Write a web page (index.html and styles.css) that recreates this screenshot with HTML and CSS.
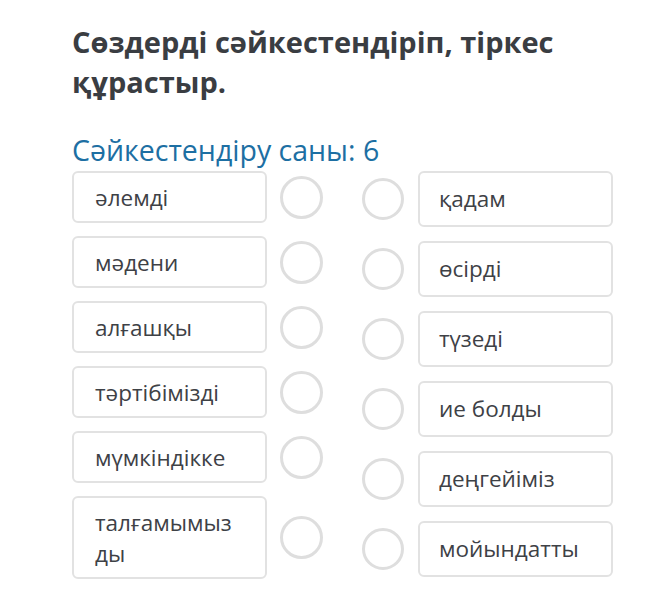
FILE: index.html
```html
<!DOCTYPE html>
<html lang="kk">
<head>
<meta charset="utf-8">
<title>Сәйкестендіру</title>
<link rel="stylesheet" href="styles.css">
</head>
<body>
<main class="task">
  <h1 class="title">Сөздерді сәйкестендіріп, тіркес құрастыр.</h1>
  <p class="count">Сәйкестендіру саны: 6</p>
  <div class="match">
    <div class="col col-left">
      <div class="row"><div class="card">әлемді</div><span class="dot"></span></div>
      <div class="row"><div class="card">мәдени</div><span class="dot"></span></div>
      <div class="row"><div class="card">алғашқы</div><span class="dot"></span></div>
      <div class="row"><div class="card">тәртібімізді</div><span class="dot"></span></div>
      <div class="row"><div class="card">мүмкіндікке</div><span class="dot"></span></div>
      <div class="row"><div class="card">талғамымыз&#8203;ды</div><span class="dot"></span></div>
    </div>
    <div class="col col-right">
      <div class="row"><span class="dot"></span><div class="card">қадам</div></div>
      <div class="row"><span class="dot"></span><div class="card">өсірді</div></div>
      <div class="row"><span class="dot"></span><div class="card">түзеді</div></div>
      <div class="row"><span class="dot"></span><div class="card">ие болды</div></div>
      <div class="row"><span class="dot"></span><div class="card">деңгейіміз</div></div>
      <div class="row"><span class="dot"></span><div class="card">мойындатты</div></div>
    </div>
  </div>
</main>
</body>
</html>
```

FILE: styles.css
```css
html, body {
  margin: 0;
  padding: 0;
  background: #ffffff;
}
body {
  font-family: "Open Sans", "DejaVu Sans", sans-serif;
  color: #3a3d42;
}
.task {
  padding: 22px 0 0 72px;
}
.title {
  margin: 0;
  width: 520px;
  font-size: 29px;
  line-height: 40px;
  font-weight: 700;
  color: #3a3d42;
}
.count {
  margin: 31px 0 0 0;
  font-size: 28.5px;
  line-height: 34px;
  color: #1d6fa3;
}
.match {
  display: flex;
  gap: 39px;
  margin-top: 4px;
}
.col {
  display: flex;
  flex-direction: column;
}
.col-left {
  gap: 13px;
}
.col-right {
  gap: 14px;
}
.row {
  display: flex;
  align-items: center;
}
.col-left .row {
  gap: 13px;
}
.col-right .row {
  gap: 14px;
}
.card {
  box-sizing: border-box;
  width: 195px;
  border: 2px solid #e2e2e2;
  border-radius: 6px;
  font-size: 22.5px;
  color: #3e4146;
}
.col-left .card {
  padding: 8.5px 20px 8.5px 21px;
  line-height: 31px;
}
.col-right .card {
  padding: 11px 19px;
  line-height: 30px;
}
.dot {
  box-sizing: border-box;
  flex: none;
  width: 43px;
  height: 43px;
  border: 3px solid #dedede;
  border-radius: 50%;
  background: #ffffff;
}
.col-right .dot {
  width: 42px;
  height: 42px;
}
```
